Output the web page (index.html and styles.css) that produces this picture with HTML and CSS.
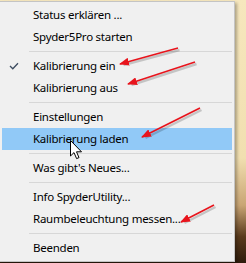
FILE: index.html
```html
<!DOCTYPE html>
<html>
<head>
    <title>Spyder Tray Menu</title>
    <link rel="stylesheet" href="styles.css">
</head>
<body>
    <div class="desktop">
        <div class="menu">
            <div class="menu-item">Status erklären ...</div>
            <div class="menu-item">Spyder5Pro starten</div>
            <div class="menu-sep"></div>
            <div class="menu-item checked">
                <svg class="check" width="10" height="8" viewBox="0 0 10 8">
                    <path d="M1 4 L3.8 6.8 L9 1.2" fill="none" stroke="#3c4c60" stroke-width="1.3"/>
                </svg>
                Kalibrierung ein
            </div>
            <div class="menu-item">Kalibrierung aus</div>
            <div class="menu-sep"></div>
            <div class="menu-item">Einstellungen</div>
            <div class="menu-item active">Kalibrierung laden</div>
            <div class="menu-sep"></div>
            <div class="menu-item">Was gibt's Neues...</div>
            <div class="menu-sep"></div>
            <div class="menu-item">Info SpyderUtility...</div>
            <div class="menu-item">Raumbeleuchtung messen...</div>
            <div class="menu-sep"></div>
            <div class="menu-item">Beenden</div>
        </div>

        <!-- annotation arrows -->
        <svg class="arrows" width="246" height="263" viewBox="0 0 246 263">
            <defs>
                <marker id="head" markerWidth="10" markerHeight="8" refX="9" refY="4" orient="auto" markerUnits="userSpaceOnUse">
                    <path d="M0 0 L10 4 L0 8 Z" fill="#e8141c"/>
                </marker>
            </defs>
            <g stroke="rgba(0,0,0,0.18)" stroke-width="2.5" fill="none" transform="translate(1.5,2)">
                <line x1="178" y1="48" x2="122" y2="63"/>
                <line x1="195" y1="62" x2="130" y2="83"/>
                <line x1="200" y1="108" x2="144" y2="136"/>
                <line x1="214" y1="205" x2="183" y2="221"/>
            </g>
            <g stroke="#e8141c" stroke-width="1.6" fill="none" marker-end="url(#head)">
                <line x1="178" y1="48" x2="120" y2="64"/>
                <line x1="195" y1="62" x2="128" y2="84"/>
                <line x1="200" y1="108" x2="142" y2="137"/>
                <line x1="214" y1="205" x2="181" y2="222"/>
            </g>
        </svg>

        <svg class="cursor" width="13" height="20" viewBox="0 0 13 20">
            <path d="M0.5 0.5 L0.5 16 L4 12.6 L6.6 18.6 L9 17.6 L6.5 11.8 L11.5 11.8 Z" fill="#fff" stroke="#000" stroke-width="1"/>
        </svg>
    </div>
</body>
</html>
```

FILE: styles.css
```css
body {
    margin: 0;
    font-family: "Noto Sans", "Open Sans", sans-serif;
    font-size: 11.5px;
    letter-spacing: -0.25px;
}
.desktop {
    position: relative;
    width: 246px;
    height: 263px;
    overflow: hidden;
    background: linear-gradient(to bottom, #f6e7bd 0%, #f1dfb0 60%, #c9a574 78%, #5a3a1c 90%, #2e1c0c 100%);
    padding-top: 1px;
    box-sizing: border-box;
}
.menu {
    width: 236px;
    margin-left: -1px;
    box-sizing: border-box;
    background-color: #f0f0f0;
    border: 1px solid #c4c4c4;
    padding: 2px;
    box-shadow: 2px 2px 3px rgba(0, 0, 0, 0.3);
}
.menu-item {
    position: relative;
    height: 22px;
    line-height: 22px;
    padding-left: 31px;
    color: #000;
    white-space: nowrap;
}
.menu-item.active {
    background-color: #91c9f7;
}
.menu-item .check {
    position: absolute;
    left: 7px;
    top: 7px;
}
.menu-sep {
    height: 7px;
    display: flex;
    align-items: center;
    padding-left: 27px;
}
.menu-sep::after {
    content: "";
    flex: 1;
    height: 1px;
    background-color: #d7d7d7;
}
.arrows {
    position: absolute;
    left: 0;
    top: 0;
}
.cursor {
    position: absolute;
    left: 70px;
    top: 140px;
}
```
